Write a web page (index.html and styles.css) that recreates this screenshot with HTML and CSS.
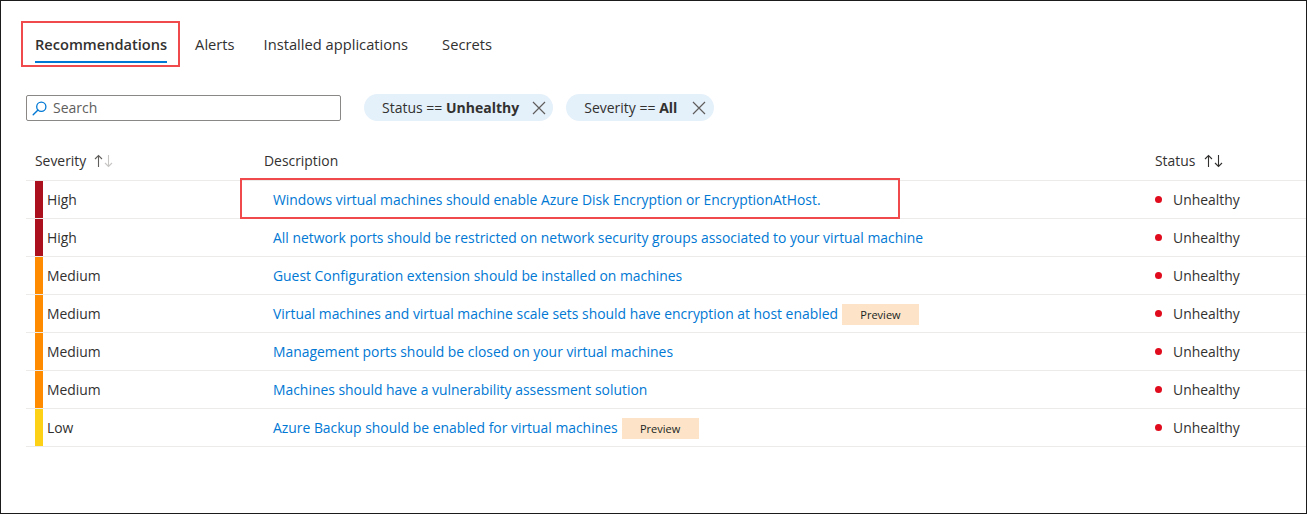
FILE: index.html
```html
<!DOCTYPE html>
<html>
<head>
<meta charset="utf-8">
<link rel="stylesheet" href="styles.css">
</head>
<body>
<div class="frame">
  <nav class="tabs">
    <div class="tab active">Recommendations<span class="callout tab-callout"></span></div>
    <div class="tab">Alerts</div>
    <div class="tab tab-apps">Installed applications</div>
    <div class="tab tab-last">Secrets</div>
  </nav>

  <div class="toolbar">
    <label class="search">
      <svg class="search-icon" width="15" height="15" viewBox="0 0 15 15"><circle cx="9.3" cy="5.7" r="4.6" fill="none" stroke="#0078d4" stroke-width="1.3"/><line x1="6" y1="9" x2="1.2" y2="13.8" stroke="#0078d4" stroke-width="1.4" stroke-linecap="round"/></svg>
      <span class="placeholder">Search</span>
    </label>
    <div class="pill">Status == <b>Unhealthy</b>
      <svg class="pill-x" width="14" height="14" viewBox="0 0 14 14"><path d="M1 1L13 13M13 1L1 13" stroke="#605e5c" stroke-width="1.2"/></svg>
    </div>
    <div class="pill pill-wide">Severity == <b>All</b>
      <svg class="pill-x" width="14" height="14" viewBox="0 0 14 14"><path d="M1 1L13 13M13 1L1 13" stroke="#605e5c" stroke-width="1.2"/></svg>
    </div>
  </div>

  <div class="table">
    <div class="row head">
      <div class="cell sev-h">Severity
        <svg class="sort" width="20" height="14" viewBox="0 0 20 14"><path d="M4.5 13V1.5M1 5L4.5 1.5L8 5" fill="none" stroke="#605e5c" stroke-width="1.1"/><path d="M14.5 1V12.5M11 9L14.5 12.5L18 9" fill="none" stroke="#c8c6c4" stroke-width="1.1"/></svg>
      </div>
      <div class="cell desc-h">Description</div>
      <div class="cell status-h">Status
        <svg class="sort" width="20" height="14" viewBox="0 0 20 14"><path d="M4.5 13V1.5M1 5L4.5 1.5L8 5" fill="none" stroke="#323130" stroke-width="1.1"/><path d="M14.5 1V12.5M11 9L14.5 12.5L18 9" fill="none" stroke="#323130" stroke-width="1.1"/></svg>
      </div>
    </div>

    <div class="row">
      <div class="cell sev"><span class="bar high"></span>High</div>
      <div class="cell desc"><a class="link">Windows virtual machines should enable Azure Disk Encryption or EncryptionAtHost.</a><span class="callout row-callout"></span></div>
      <div class="cell status"><span class="dot"></span>Unhealthy</div>
    </div>
    <div class="row">
      <div class="cell sev"><span class="bar high"></span>High</div>
      <div class="cell desc"><a class="link">All network ports should be restricted on network security groups associated to your virtual machine</a></div>
      <div class="cell status"><span class="dot"></span>Unhealthy</div>
    </div>
    <div class="row">
      <div class="cell sev"><span class="bar medium"></span>Medium</div>
      <div class="cell desc"><a class="link">Guest Configuration extension should be installed on machines</a></div>
      <div class="cell status"><span class="dot"></span>Unhealthy</div>
    </div>
    <div class="row">
      <div class="cell sev"><span class="bar medium"></span>Medium</div>
      <div class="cell desc"><a class="link">Virtual machines and virtual machine scale sets should have encryption at host enabled</a><span class="badge">Preview</span></div>
      <div class="cell status"><span class="dot"></span>Unhealthy</div>
    </div>
    <div class="row">
      <div class="cell sev"><span class="bar medium"></span>Medium</div>
      <div class="cell desc"><a class="link">Management ports should be closed on your virtual machines</a></div>
      <div class="cell status"><span class="dot"></span>Unhealthy</div>
    </div>
    <div class="row">
      <div class="cell sev"><span class="bar medium"></span>Medium</div>
      <div class="cell desc"><a class="link">Machines should have a vulnerability assessment solution</a></div>
      <div class="cell status"><span class="dot"></span>Unhealthy</div>
    </div>
    <div class="row">
      <div class="cell sev"><span class="bar low"></span>Low</div>
      <div class="cell desc"><a class="link">Azure Backup should be enabled for virtual machines</a><span class="badge">Preview</span></div>
      <div class="cell status"><span class="dot"></span>Unhealthy</div>
    </div>
  </div>
</div>
</body>
</html>
```
FILE: styles.css
```css
* { box-sizing: border-box; }
html, body { margin: 0; padding: 0; background: #fff; }
body {
  font-family: "Open Sans", "Noto Sans", sans-serif;
  font-size: 13.9px;
  color: #323130;
}
.frame {
  width: 1307px;
  height: 514px;
  border: 1px solid #1b1b1b;
  overflow: hidden;
}

/* tabs */
.tabs {
  display: flex;
  gap: 28px;
  margin: 33px 0 0 34px;
}
.tab {
  position: relative;
  font-size: 14.7px;
  line-height: 20px;
  padding-bottom: 7px;
  border-bottom: 2px solid transparent;
  color: #323130;
}
.tab.active {
  font-weight: 600;
  font-size: 14.6px;
  border-bottom-color: #0078d4;
}
.tab-apps { margin-left: 1px; }
.tab-last { margin-left: 6px; }
.callout {
  position: absolute;
  border: 2px solid #f04a4d;
  pointer-events: none;
}
.tab-callout {
  left: -14px;
  top: -13px;
  width: 159px;
  height: 46px;
}

/* toolbar */
.toolbar {
  display: flex;
  align-items: center;
  margin: 31px 0 0 25px;
  height: 27px;
}
.search {
  display: flex;
  align-items: center;
  width: 315px;
  height: 26px;
  border: 1px solid #8a8886;
  border-radius: 2px;
  padding-left: 5px;
  margin-right: 23px;
}
.search-icon { flex: none; margin-right: 6px; margin-top: 1px; }
.placeholder { color: #605e5c; font-size: 14px; }
.pill {
  display: flex;
  align-items: center;
  height: 27px;
  border-radius: 14px;
  background: #e4f0fa;
  padding: 0 7px 0 18px;
  margin-right: 13px;
  font-size: 14px;
  white-space: pre;
}
.pill b { font-weight: 700; }
.pill-x { margin-left: 13px; }
.pill-wide { padding-right: 8px; }
.pill-wide .pill-x { margin-left: 15px; }

/* table */
.table {
  margin: 21px 0 0 25px;
}
.row {
  display: grid;
  grid-template-columns: 229px 1fr 160px;
  height: 38px;
  border-bottom: 1px solid #edebe9;
}
.row.head { height: 39px; }
.cell {
  display: flex;
  align-items: center;
  padding-left: 9px;
  position: relative;
}
.head .cell { padding-bottom: 1px; }
.sort { margin-left: 8px; margin-top: 1px; }
.status-h .sort { margin-left: 9px; }
.sev { align-items: stretch; line-height: 37px; }
.bar {
  width: 8px;
  margin-right: 4px;
  flex: none;
}
.bar.high { background: #ab101f; }
.bar.medium { background: #ff8c00; }
.bar.low { background: #fcd116; }
.desc { padding-left: 18px; }
.link { color: #0078d4; text-decoration: none; white-space: nowrap; }
.badge {
  margin-left: 4px;
  background: #fde4c8;
  width: 77px;
  height: 21px;
  display: inline-flex;
  align-items: center;
  justify-content: center;
  font-size: 11px;
  color: #201f1e;
  margin-top: 1px;
}
.row-callout {
  left: -15px;
  top: -3px;
  width: 660px;
  height: 41px;
}
.dot {
  width: 7px;
  height: 7px;
  border-radius: 50%;
  background: #e00b1c;
  margin-right: 11px;
  flex: none;
}
```
